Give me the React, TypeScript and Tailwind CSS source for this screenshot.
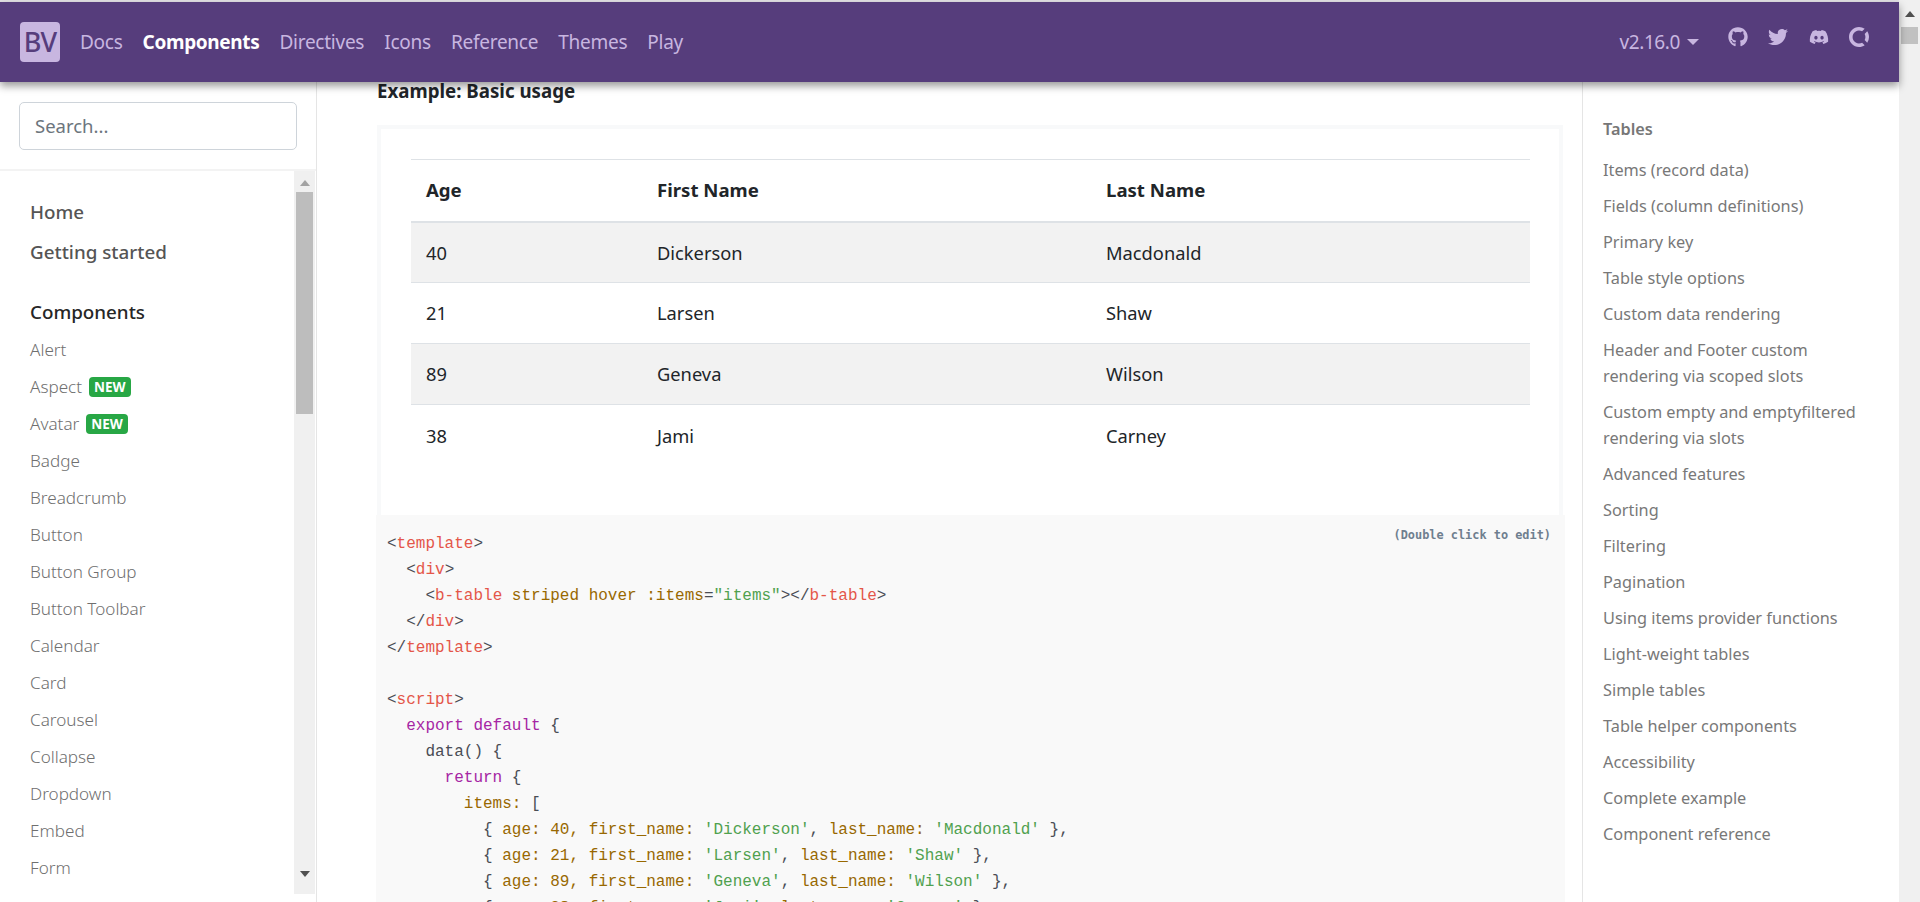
import React from 'react';
import { FaGithub, FaTwitter, FaDiscord } from 'react-icons/fa';
import { SiOpencollective } from 'react-icons/si';

const NAV_LINKS = ['Docs', 'Components', 'Directives', 'Icons', 'Reference', 'Themes', 'Play'];

const SIDE_COMPONENTS = [
  { name: 'Alert' },
  { name: 'Aspect', isNew: true },
  { name: 'Avatar', isNew: true },
  { name: 'Badge' },
  { name: 'Breadcrumb' },
  { name: 'Button' },
  { name: 'Button Group' },
  { name: 'Button Toolbar' },
  { name: 'Calendar' },
  { name: 'Card' },
  { name: 'Carousel' },
  { name: 'Collapse' },
  { name: 'Dropdown' },
  { name: 'Embed' },
  { name: 'Form' },
];

const TOC = [
  'Items (record data)',
  'Fields (column definitions)',
  'Primary key',
  'Table style options',
  'Custom data rendering',
  'Header and Footer custom rendering via scoped slots',
  'Custom empty and emptyfiltered rendering via slots',
  'Advanced features',
  'Sorting',
  'Filtering',
  'Pagination',
  'Using items provider functions',
  'Light-weight tables',
  'Simple tables',
  'Table helper components',
  'Accessibility',
  'Complete example',
  'Component reference',
];

const ROWS = [
  { age: 40, first: 'Dickerson', last: 'Macdonald' },
  { age: 21, first: 'Larsen', last: 'Shaw' },
  { age: 89, first: 'Geneva', last: 'Wilson' },
  { age: 38, first: 'Jami', last: 'Carney' },
];

// token colours, same as the highlighter on the docs page
const P = 'text-[#4a4d55]';
const T = 'text-[#e45649]';
const A = 'text-[#986801]';
const S = 'text-[#50a14f]';
const K = 'text-[#a626a4]';

type Tok = [string, string];

const rowLine = (age: string, first: string, last: string): Tok[] => [
  ['          { ', P],
  ['age: ' + age + ', first_name: ', A],
  ["'" + first + "'", S],
  [', ', P],
  ['last_name: ', A],
  ["'" + last + "'", S],
  [' },', P],
];

const CODE: Tok[][] = [
  [['<', P], ['template', T], ['>', P]],
  [['  <', P], ['div', T], ['>', P]],
  [['    <', P], ['b-table', T], [' striped hover :items', A], ['=', P], ['"items"', S], ['></', P], ['b-table', T], ['>', P]],
  [['  </', P], ['div', T], ['>', P]],
  [['</', P], ['template', T], ['>', P]],
  [[' ', P]],
  [['<', P], ['script', T], ['>', P]],
  [['  ', P], ['export default', K], [' {', P]],
  [['    data() {', P]],
  [['      ', P], ['return', K], [' {', P]],
  [['        ', P], ['items:', A], [' [', P]],
  rowLine('40', 'Dickerson', 'Macdonald'),
  rowLine('21', 'Larsen', 'Shaw'),
  rowLine('89', 'Geneva', 'Wilson'),
  rowLine('38', 'Jami', 'Carney'),
];

function Arrow({ up, dim }: { up?: boolean; dim?: boolean }) {
  return (
    <svg width="10" height="6" viewBox="0 0 10 6" className={dim ? 'fill-[#a3a3a3]' : 'fill-[#505050]'}>
      <polygon points={up ? '5,0 10,6 0,6' : '0,0 10,0 5,6'} />
    </svg>
  );
}

function Navbar() {
  return (
    <header className="relative z-10 flex h-[80px] shrink-0 items-center bg-[#563d7c] pl-[20px] shadow-[0_4px_8px_rgba(0,0,0,0.4)]">
      <div className="flex h-[40px] w-[40px] items-center justify-center rounded-[4px] bg-[#c8b6e0] text-[27px] font-medium tracking-[-1px] text-[#563d7c]">
        BV
      </div>
      <nav className="ml-[10px] flex items-center">
        {NAV_LINKS.map((link) => (
          <a
            key={link}
            className={
              link === 'Components'
                ? 'px-[10px] text-[19px] font-bold tracking-[-0.35px] text-white'
                : 'px-[10px] text-[19px] tracking-[-0.25px] text-[#c8b6e0]'
            }
          >
            {link}
          </a>
        ))}
      </nav>
      <div className="ml-auto flex items-center pr-[30px] text-[#c8b6e0]">
        <span className="flex items-center text-[19px] tracking-[-0.4px]">
          v2.16.0
          <span className="ml-[7px] h-0 w-0 border-x-[6px] border-t-[6px] border-x-transparent border-t-[#c8b6e0]" />
        </span>
        <div className="ml-[29px] flex w-[141px] -translate-y-[5px] items-center justify-between">
          <FaGithub size={20} />
          <FaTwitter size={20} />
          <FaDiscord size={20} />
          <SiOpencollective size={20} />
        </div>
      </div>
    </header>
  );
}

function Sidebar() {
  return (
    <aside className="flex w-[317px] shrink-0 flex-col border-r border-[#e5e5e5]">
      <div className="h-[89px] shrink-0 border-b-2 border-[#f3f3f3] px-[19px] pt-[20px]">
        <div className="flex h-[48px] w-[278px] items-center rounded-[5px] border border-[#ced4da] px-[15px] text-[18.5px] text-[#6c757d]">
          Search...
        </div>
      </div>
      <div className="flex h-[723px] shrink-0">
        <div className="min-w-0 flex-1 overflow-hidden pl-[30px] pt-[23px]">
          <a className="block h-[40px] text-[18.8px] leading-[36px] font-medium text-[#555555]">Home</a>
          <a className="block h-[40px] text-[18.8px] leading-[36px] font-medium text-[#555555]">Getting started</a>
          <div className="mt-[20px] h-[37.5px] text-[18.8px] leading-[36px] font-medium text-[#262626]">Components</div>
          {SIDE_COMPONENTS.map((item) => (
            <a key={item.name} className="flex h-[37px] items-center text-[17.1px] font-light text-[#6f6f6f]">
              {item.name}
              {item.isNew && (
                <span className="ml-[7px] flex h-[20px] items-center rounded-[4px] bg-[#28a745] px-[5px] text-[13.5px] font-bold text-white">
                  NEW
                </span>
              )}
            </a>
          ))}
        </div>
        <div className="mr-[1px] flex w-[21px] shrink-0 flex-col items-center bg-[#f0f0f0] pt-[9px]">
          <Arrow up dim />
          <div className="mt-[6px] h-[222px] w-[17px] bg-[#bdbdbd]" />
          <div className="mt-auto mb-[17px]">
            <Arrow />
          </div>
        </div>
      </div>
    </aside>
  );
}

function ExampleTable() {
  return (
    <table className="w-full table-fixed border-collapse text-[18.3px] text-[#212529]">
      <colgroup>
        <col className="w-[231px]" />
        <col className="w-[449px]" />
        <col />
      </colgroup>
      <thead>
        <tr className="h-[62px] border-t border-[#dee2e6] border-b-[2px] text-[18.6px] font-bold">
          <th className="px-[15px] text-left font-bold">Age</th>
          <th className="px-[15px] text-left font-bold">First Name</th>
          <th className="px-[15px] text-left font-bold">Last Name</th>
        </tr>
      </thead>
      <tbody>
        {ROWS.map((row, idx) => (
          <tr key={row.age} className={idx % 2 === 0 ? 'h-[61px] border-b border-[#dee2e6] bg-[#f2f2f2]' : 'h-[61px] border-b border-[#dee2e6] last:border-b-0'}>
            <td className="px-[15px]">{row.age}</td>
            <td className="px-[15px]">{row.first}</td>
            <td className="px-[15px]">{row.last}</td>
          </tr>
        ))}
      </tbody>
    </table>
  );
}

function Main() {
  return (
    <main className="min-w-0 flex-1 overflow-hidden border-r border-[#e5e5e5] pl-[60px]">
      <h5 className="text-[18.7px] leading-[18px] font-bold text-[#212529]">Example: Basic usage</h5>
      <div className="mt-[25px] h-[390px] w-[1186px] border-[4px] border-b-0 border-[#f8f9fa] pt-[30px] pr-[29px] pl-[30px]">
        <ExampleTable />
      </div>
      <div className="relative ml-[-1px] h-[388px] w-[1189px] bg-[#f9f9f9] pt-[16px] pl-[11px] font-['Liberation_Mono',monospace] text-[16px] leading-[26px]">
        <span className="absolute top-[12px] right-[14px] font-['DejaVu_Sans_Mono',monospace] text-[11.9px] leading-[16px] font-bold text-[#6f7f8f]">
          (Double click to edit)
        </span>
        {CODE.map((line, i) => (
          <div key={i} className="h-[26px] whitespace-pre">
            {line.map(([text, color], j) => (
              <span key={j} className={color}>
                {text}
              </span>
            ))}
          </div>
        ))}
      </div>
    </main>
  );
}

function Toc() {
  return (
    <aside className="w-[316px] shrink-0 pl-[20px] pt-[34px] text-[16.3px] leading-[26.25px]">
      <div className="mb-[14.5px] font-semibold text-[#777777]">Tables</div>
      <ul className="flex flex-col gap-[9.75px] pr-[30px]">
        {TOC.map((item) => (
          <li key={item} className="text-[#787878]">
            {item}
          </li>
        ))}
      </ul>
    </aside>
  );
}

export default function App() {
  return (
    <div className="flex h-[902px] w-[1920px] overflow-hidden bg-white font-['Noto_Sans',sans-serif]">
      <div className="flex min-w-0 flex-1 flex-col">
        <div className="h-[2px] shrink-0 bg-[#e4e2e6]" />
        <Navbar />
        <div className="flex min-h-0 flex-1">
          <Sidebar />
          <Main />
          <Toc />
        </div>
      </div>
      {/* page scrollbar */}
      <div className="flex w-[21px] shrink-0 flex-col items-center bg-[#f0f0f0] pt-[11px]">
        <Arrow up />
        <div className="mt-[10px] h-[17px] w-[17px] bg-[#c1c1c1]" />
      </div>
    </div>
  );
}
